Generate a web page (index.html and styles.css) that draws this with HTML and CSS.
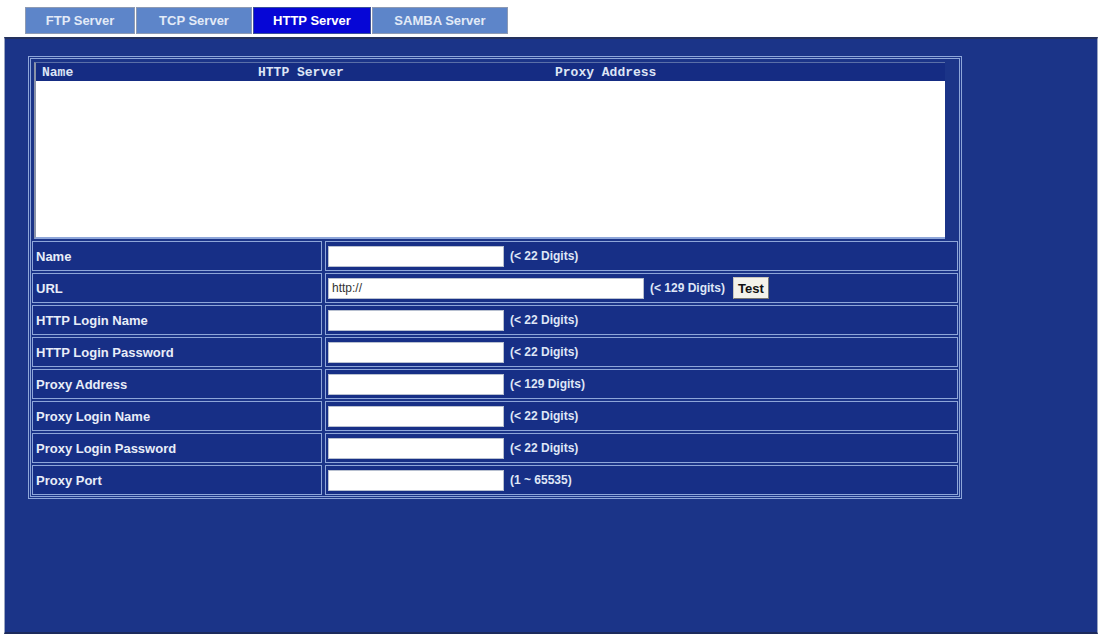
FILE: index.html
```html
<!DOCTYPE html>
<html lang="en">
<head>
    <meta charset="UTF-8">
    <title>HTTP Server</title>
    <link rel="stylesheet" href="styles.css">
</head>
<body>
<div class="tabs">
    <div class="tab tab-ftp">FTP Server</div>
    <div class="tab tab-tcp">TCP Server</div>
    <div class="tab tab-http active">HTTP Server</div>
    <div class="tab tab-samba">SAMBA Server</div>
</div>

<div class="panel">
    <div class="frame">
        <div class="list-box">
            <div class="list-head">
                <span class="col-name">Name</span>
                <span class="col-server">HTTP Server</span>
                <span class="col-proxy">Proxy Address</span>
            </div>
            <div class="list-body"></div>
        </div>

        <div class="row">
            <div class="label">Name</div>
            <div class="value"><input class="field" type="text"><span class="hint">(&lt; 22 Digits)</span></div>
        </div>
        <div class="row">
            <div class="label">URL</div>
            <div class="value"><input class="field field-wide" type="text" value="http://"><span class="hint">(&lt; 129 Digits)</span><button class="test-btn">Test</button></div>
        </div>
        <div class="row">
            <div class="label">HTTP Login Name</div>
            <div class="value"><input class="field" type="text"><span class="hint">(&lt; 22 Digits)</span></div>
        </div>
        <div class="row">
            <div class="label">HTTP Login Password</div>
            <div class="value"><input class="field" type="password"><span class="hint">(&lt; 22 Digits)</span></div>
        </div>
        <div class="row">
            <div class="label">Proxy Address</div>
            <div class="value"><input class="field" type="text"><span class="hint">(&lt; 129 Digits)</span></div>
        </div>
        <div class="row">
            <div class="label">Proxy Login Name</div>
            <div class="value"><input class="field" type="text"><span class="hint">(&lt; 22 Digits)</span></div>
        </div>
        <div class="row">
            <div class="label">Proxy Login Password</div>
            <div class="value"><input class="field" type="password"><span class="hint">(&lt; 22 Digits)</span></div>
        </div>
        <div class="row">
            <div class="label">Proxy Port</div>
            <div class="value"><input class="field" type="text"><span class="hint">(1 ~ 65535)</span></div>
        </div>
    </div>
</div>
</body>
</html>
```

FILE: styles.css
```css
body {
    margin: 0;
    background-color: #ffffff;
    font-family: 'Liberation Sans', Arial, sans-serif;
}

.tabs {
    display: flex;
    padding: 7px 0 0 25px;
}

.tab {
    height: 27px;
    box-sizing: border-box;
    display: flex;
    align-items: center;
    justify-content: center;
    font-size: 13px;
    font-weight: bold;
    color: #e2eaf7;
    background-color: #5d85c9;
    border: 1px solid #8d9ab3;
    margin-right: 1px;
}

.tab-ftp { width: 110px; }
.tab-tcp { width: 116px; }
.tab-http { width: 118px; }
.tab-samba { width: 136px; }

.tab.active {
    background-color: #0606d6;
    color: #ffffff;
    border-color: #3a4f9a;
}

.panel {
    margin: 3px 0 0 4px;
    width: 1094px;
    height: 597px;
    box-sizing: border-box;
    background-color: #1b3488;
    border-top: 2px solid #24325e;
    border-left: 1px solid #9ba6c2;
    border-right: 1px solid #9ba6c2;
    border-bottom: 2px solid #1c2a5c;
    padding: 17px 0 0 23px;
}

.frame {
    width: 934px;
    box-sizing: border-box;
    border: 3px double #8ea6d9;
    padding: 3px 1px 1px 1px;
}

.list-box {
    margin: 0 13px 0 2px;
    height: 177px;
    box-sizing: border-box;
    border-top: 1px solid #5a6fa8;
    border-left: 2px solid #8a93a8;
    border-bottom: 2px solid #8ea6d9;
    display: flex;
    flex-direction: column;
}

.list-head {
    height: 18px;
    background-color: #152c83;
    display: flex;
    align-items: center;
    font-family: 'Liberation Mono', 'Courier New', monospace;
    font-size: 13px;
    font-weight: bold;
    color: #dde5f5;
}

.col-name {
    width: 216px;
    padding-left: 6px;
}

.col-server {
    width: 297px;
}

.list-body {
    flex: 1;
    background-color: #ffffff;
}

.row {
    display: flex;
    gap: 3px;
    margin-top: 2px;
    height: 30px;
}

.label,
.value {
    box-sizing: border-box;
    border: 1px solid #8ea6d9;
    background-color: #172f86;
    display: flex;
    align-items: center;
}

.label {
    width: 290px;
    padding-left: 3px;
    font-size: 13px;
    font-weight: bold;
    color: #e8edf8;
}

.value {
    flex: 1;
    padding-left: 2px;
}

.field {
    width: 176px;
    height: 21px;
    box-sizing: border-box;
    border: 1px solid #b8c0d0;
    background-color: #ffffff;
    font-family: 'Liberation Sans', Arial, sans-serif;
    font-size: 12px;
    color: #333333;
    padding: 1px 3px;
    margin: 0;
}

.field-wide {
    width: 316px;
}

.hint {
    margin-left: 6px;
    font-size: 12px;
    font-weight: bold;
    color: #dfe6f6;
}

.test-btn {
    margin-left: 8px;
    height: 22px;
    padding: 0 4px;
    font-family: 'Liberation Sans', Arial, sans-serif;
    font-size: 13px;
    font-weight: bold;
    color: #111111;
    background-color: #f4f2ea;
    border: 1px solid #c8c6bc;
    border-right-color: #7b7a74;
    border-bottom-color: #7b7a74;
}
```
